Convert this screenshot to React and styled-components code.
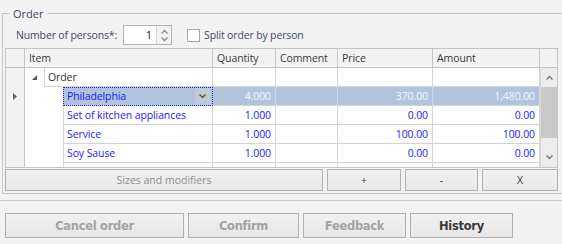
import React from "react";
import styled, { createGlobalStyle } from "styled-components";

const Global = createGlobalStyle`
  html, body { margin: 0; padding: 0; background: #f3f3f3; overflow: hidden; }
  body { font-family: "Open Sans", "Noto Sans", sans-serif; font-size: 10.5px; color: #3a3a3a; }
  * { box-sizing: border-box; }
`;

const Page = styled.div`
  width: 562px;
  height: 244px;
  overflow: hidden;
  display: flex;
  flex-direction: column;
`;

const GroupBox = styled.fieldset`
  margin: 6px 0 0 2px;
  width: 570px;
  height: 188px;
  border: 1px solid #c8c8c8;
  padding: 0 0 0 2px;
  display: flex;
  flex-direction: column;
  flex-shrink: 0;
`;

const Legend = styled.legend`
  margin-left: 5px;
  padding: 0 4px 0 3px;
  color: #404a68;
  font-size: 11px;
  line-height: 15px;
`;

const TopBar = styled.div`
  display: flex;
  align-items: center;
  height: 22px;
  margin-top: 3px;
  padding-left: 11px;
`;

const Label = styled.span`
  color: #404a68;
  letter-spacing: -0.15px;
`;

const Spinner = styled.div`
  margin-left: 6px;
  width: 49px;
  height: 20px;
  border: 1px solid #b4b4b4;
  background: #fff;
  display: flex;
`;

const SpinValue = styled.div`
  flex: 1;
  text-align: right;
  padding-right: 4px;
  line-height: 18px;
  color: #222;
`;

const SpinButtons = styled.div`
  width: 15px;
  border-left: 1px solid #d8d8d8;
  background: #f3f3f3;
  display: flex;
  flex-direction: column;
  align-items: center;
  justify-content: space-around;
  padding: 1px 0;
`;

const Check = styled.span`
  width: 13px;
  height: 13px;
  border: 1px solid #a8a8a8;
  background: #fff;
  margin-left: 15px;
`;

const CheckLabel = styled.span`
  margin-left: 4px;
  color: #404a68;
  letter-spacing: -0.15px;
`;

const GridFrame = styled.div`
  margin-top: 2px;
  width: 553px;
  height: 120px;
  border: 1px solid #c6c6c6;
  background: #fff;
  display: flex;
  flex-direction: column;
  overflow: hidden;
  flex-shrink: 0;
`;

const COLS = "19px 188px 63px 62px 95px 107px 17px";

const HeaderRow = styled.div`
  display: grid;
  grid-template-columns: ${COLS};
  height: 19px;
  background: #f3f3f3;
  border-bottom: 1px solid #c6c6c6;
`;

const HeadCell = styled.div`
  border-right: ${(p) => (p.$last ? "none" : "1px solid #c6c6c6")};
  padding-left: 4px;
  line-height: 18px;
  color: #3a3a3a;
  letter-spacing: -0.1px;
`;

const Body = styled.div`
  flex: 1;
  display: flex;
  min-height: 0;
`;

const Rows = styled.div`
  width: 534px;
  display: flex;
  flex-direction: column;
`;

const Row = styled.div`
  display: grid;
  grid-template-columns: 19px ${(p) => p.$indent}px ${(p) => 188 - p.$indent}px 63px 62px 95px 107px;
  height: 19px;
  flex-shrink: 0;
  background: ${(p) => (p.$sel ? "#b1c4dd" : "#fff")};
`;

const Indicator = styled.div`
  background: #f3f3f3;
  border-right: 1px solid #c6c6c6;
  display: flex;
  align-items: center;
  justify-content: center;
`;

const Indent = styled.div`
  background: #fff;
  display: flex;
  align-items: center;
  padding-left: 7px;
`;

const Cell = styled.div`
  border-right: 1px solid #d4d4d4;
  border-bottom: 1px solid #d4d4d4;
  border-left: ${(p) => (p.$first ? "1px solid #d4d4d4" : "none")};
  line-height: 18px;
  padding: 0 ${(p) => (p.$num ? "4px" : "3px")};
  text-align: ${(p) => (p.$num ? "right" : "left")};
  color: ${(p) => (p.$sel ? "#f2f5fa" : p.$blue ? "#1a1aff" : "#333")};
  white-space: nowrap;
  overflow: hidden;
  letter-spacing: -0.1px;
`;

const FocusCell = styled(Cell)`
  background: #b1c4dd;
  outline: 1px dotted #1a1aff;
  outline-offset: -1px;
  color: #1a1aff;
  display: flex;
  justify-content: space-between;
`;

const DropBtn = styled.span`
  width: 15px;
  height: 16px;
  margin: 1px -1px 0 0;
  background: #c3cad4;
  display: flex;
  align-items: center;
  justify-content: center;
`;

const Scrollbar = styled.div`
  width: 17px;
  border-left: 1px solid #d8d8d8;
  background: #ececec;
  display: flex;
  flex-direction: column;
  align-items: center;
`;

const ScrollArrow = styled.div`
  height: 19px;
  width: 100%;
  display: flex;
  align-items: center;
  justify-content: center;
`;

const Thumb = styled.div`
  width: 16px;
  height: 51px;
  background: #c9c9c9;
`;

const ScrollSpace = styled.div`
  flex: 1;
`;

const ButtonRow = styled.div`
  display: flex;
  gap: 4px;
  margin-top: 1px;
  width: 553px;
`;

const SmallButton = styled.button`
  width: ${(p) => p.$w}px;
  height: 22px;
  border: 1px solid #b0b0b0;
  background: linear-gradient(#f0f0f0, #e8e8e8);
  font-family: inherit;
  font-size: 10.5px;
  color: ${(p) => (p.$disabled ? "#8f8f8f" : "#3a3a3a")};
  padding: 0;
`;

const Separator = styled.div`
  margin-top: 6px;
  height: 1px;
  background: #cacaca;
  flex-shrink: 0;
`;

const Footer = styled.div`
  display: flex;
  gap: 4px;
  margin: 12px 0 0 5px;
`;

const BigButton = styled.button`
  width: ${(p) => p.$w}px;
  height: 25px;
  border: 1px solid #b0b0b0;
  background: linear-gradient(#f1f1f1, #e6e6e6);
  font-family: "DejaVu Sans", "Open Sans", sans-serif;
  font-weight: bold;
  font-size: 11.5px;
  letter-spacing: -0.3px;
  color: ${(p) => (p.$disabled ? "#a3a3a3" : "#3a3a3a")};
  padding: 0;
`;

const Chevron = ({ up, color = "#8a8a8a", w = 7 }) => (
  <svg width={w} height="5" viewBox="0 0 7 5">
    <path d={up ? "M0.5 4.5 L3.5 1.5 L6.5 4.5" : "M0.5 0.5 L3.5 3.5 L6.5 0.5"} fill="none" stroke={color} strokeWidth="1.4" />
  </svg>
);

const items = [
  { name: "Set of kitchen appliances", qty: "1.000", price: "0.00", amount: "0.00" },
  { name: "Service", qty: "1.000", price: "100.00", amount: "100.00" },
  { name: "Soy Sause", qty: "1.000", price: "0.00", amount: "0.00" },
  { name: "", qty: "", price: "", amount: "" },
];

export default function App() {
  return (
    <Page>
      <Global />
      <GroupBox>
        <Legend>Order</Legend>
        <TopBar>
          <Label>Number of persons*:</Label>
          <Spinner>
            <SpinValue>1</SpinValue>
            <SpinButtons>
              <Chevron up w={7} />
              <Chevron w={7} />
            </SpinButtons>
          </Spinner>
          <Check />
          <CheckLabel>Split order by person</CheckLabel>
        </TopBar>
        <GridFrame>
          <HeaderRow>
            <HeadCell />
            <HeadCell>Item</HeadCell>
            <HeadCell>Quantity</HeadCell>
            <HeadCell>Comment</HeadCell>
            <HeadCell>Price</HeadCell>
            <HeadCell>Amount</HeadCell>
            <HeadCell $last />
          </HeaderRow>
          <Body>
            <Rows>
              <Row $indent={19}>
                <Indicator />
                <Indent>
                  <svg width="5" height="5" viewBox="0 0 5 5">
                    <path d="M5 0 L5 5 L0 5 Z" fill="#555" />
                  </svg>
                </Indent>
                <Cell $first>Order</Cell>
                <Cell />
                <Cell />
                <Cell />
                <Cell />
              </Row>
              <Row $indent={38} $sel>
                <Indicator>
                  <svg width="4" height="7" viewBox="0 0 4 7">
                    <path d="M0 0 L4 3.5 L0 7 Z" fill="#666" />
                  </svg>
                </Indicator>
                <Indent />
                <FocusCell $first>
                  <span>Philadelphia</span>
                  <DropBtn>
                    <Chevron color="#555" />
                  </DropBtn>
                </FocusCell>
                <Cell $num $sel>4.000</Cell>
                <Cell $sel />
                <Cell $num $sel>370.00</Cell>
                <Cell $num $sel>1,480.00</Cell>
              </Row>
              {items.map((it, i) => (
                <Row key={i} $indent={38}>
                  <Indicator />
                  <Indent />
                  <Cell $first $blue>{it.name}</Cell>
                  <Cell $num $blue>{it.qty}</Cell>
                  <Cell />
                  <Cell $num $blue>{it.price}</Cell>
                  <Cell $num $blue>{it.amount}</Cell>
                </Row>
              ))}
            </Rows>
            <Scrollbar>
              <ScrollArrow>
                <Chevron up color="#777" />
              </ScrollArrow>
              <Thumb />
              <ScrollSpace />
              <ScrollArrow>
                <Chevron color="#777" />
              </ScrollArrow>
            </Scrollbar>
          </Body>
        </GridFrame>
        <ButtonRow>
          <SmallButton $w={318} $disabled>Sizes and modifiers</SmallButton>
          <SmallButton $w={74}>+</SmallButton>
          <SmallButton $w={73}>-</SmallButton>
          <SmallButton $w={76}>X</SmallButton>
        </ButtonRow>
      </GroupBox>
      <Separator />
      <Footer>
        <BigButton $w={179} $disabled>Cancel order</BigButton>
        <BigButton $w={111} $disabled>Confirm</BigButton>
        <BigButton $w={103} $disabled>Feedback</BigButton>
        <BigButton $w={103}>History</BigButton>
      </Footer>
    </Page>
  );
}
